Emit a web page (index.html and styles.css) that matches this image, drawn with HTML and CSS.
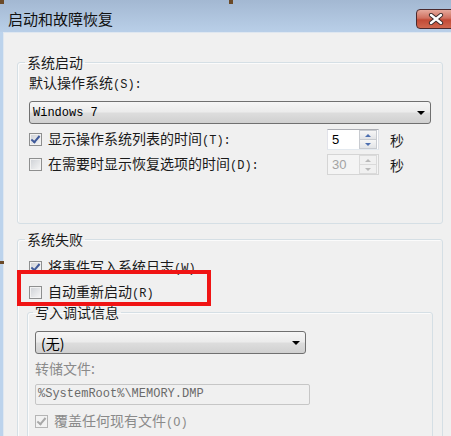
FILE: index.html
```html
<!DOCTYPE html>
<html lang="zh-CN">

<head>
    <meta charset="UTF-8">
    <meta name="viewport" content="width=device-width, initial-scale=1.0">
    <title>启动和故障恢复</title>
    <link rel="stylesheet" href="styles.css">
</head>

<body>
    <div class="window">
        <div class="titlebar">
            <span class="title">启动和故障恢复</span>
            <button class="close">
                <svg width="16" height="12" viewBox="0 0 16 12">
                    <path d="M3 2 L13 10 M13 2 L3 10" stroke="#3a2a2a" stroke-width="4.2" stroke-linecap="round" />
                    <path d="M3 2 L13 10 M13 2 L3 10" stroke="#ffffff" stroke-width="2.4" stroke-linecap="round" />
                </svg>
            </button>
        </div>

        <div class="client">
            <fieldset class="group startup">
                <legend>系统启动</legend>
                <div class="label">默认操作系统<span class="key">(S):</span></div>
                <div class="combo">
                    <span class="mono">Windows 7</span>
                    <span class="arrow"></span>
                </div>
                <div class="row first">
                    <span class="check checked"></span>
                    <span class="row-label">显示操作系统列表的时间<span class="key">(T):</span></span>
                    <div class="spin">
                        <span class="spin-value">5</span>
                        <span class="spin-buttons">
                            <span class="spin-btn"><span class="up"></span></span>
                            <span class="spin-btn"><span class="down"></span></span>
                        </span>
                    </div>
                    <span class="unit">秒</span>
                </div>
                <div class="row">
                    <span class="check"></span>
                    <span class="row-label">在需要时显示恢复选项的时间<span class="key">(D):</span></span>
                    <div class="spin disabled">
                        <span class="spin-value">30</span>
                        <span class="spin-buttons">
                            <span class="spin-btn"><span class="up"></span></span>
                            <span class="spin-btn"><span class="down"></span></span>
                        </span>
                    </div>
                    <span class="unit">秒</span>
                </div>
            </fieldset>

            <fieldset class="group failure">
                <legend>系统失败</legend>
                <div class="row first">
                    <span class="check checked"></span>
                    <span class="row-label">将事件写入系统日志<span class="key">(W)</span></span>
                </div>
                <div class="row">
                    <span class="check"></span>
                    <span class="row-label">自动重新启动<span class="key">(R)</span></span>
                </div>

                <fieldset class="group debug">
                    <legend>写入调试信息</legend>
                    <div class="combo short">
                        <span>(无)</span>
                        <span class="arrow"></span>
                    </div>
                    <div class="label muted">转储文件:</div>
                    <div class="textbox mono">%SystemRoot%\MEMORY.DMP</div>
                    <div class="row dump">
                        <span class="check checked disabled"></span>
                        <span class="row-label muted">覆盖任何现有文件<span class="key">(O)</span></span>
                    </div>
                </fieldset>
            </fieldset>
        </div>
    </div>

    <!-- annotation drawn over the dialog -->
    <div class="highlight"></div>
    <div class="mark mark-a"></div>
    <div class="mark mark-b"></div>
    <div class="mark mark-c"></div>
</body>

</html>
```

FILE: styles.css
```css
body {
    margin: 0;
    width: 451px;
    height: 436px;
    overflow: hidden;
    background-color: #bcd3ec;
    font-family: "Noto Sans CJK SC", "Liberation Sans", sans-serif;
    color: #1a1a1a;
    position: relative;
}

.window {
    display: flex;
    flex-direction: column;
    height: 100%;
}

.titlebar {
    height: 32px;
    display: flex;
    align-items: flex-start;
    padding-left: 8px;
    background: linear-gradient(#a3b8d2, #b9cfe8);
    overflow: hidden;
    flex-shrink: 0;
}

.title {
    margin-top: 9px;
    font-size: 15px;
    line-height: 20px;
    color: #111;
}

.close {
    margin-left: auto;
    margin-top: 9px;
    margin-right: -5px;
    width: 40px;
    height: 20px;
    padding: 0;
    border: 1px solid #4a2a2e;
    border-radius: 4px;
    background: linear-gradient(#e6a99c, #d0705f 45%, #c24a36 55%, #d0684f);
    display: flex;
    align-items: center;
    justify-content: center;
}

.client {
    flex: 1;
    min-height: 0;
    margin-left: 3px;
    border-left: 1px solid #dfe7f0;
    border-top: 1px solid #dfe7f0;
    background-color: #f0f0f0;
    padding: 21px 8px 0 13px;
}

.group {
    margin: 0;
    border: 1px solid #d5dfe5;
    border-radius: 3px;
    box-shadow: inset 1px 1px 0 #fbfbfb;
    padding: 3px 11px 48px 11px;
}

.group legend {
    font-size: 14px;
    line-height: 16px;
    padding: 0 2px;
    margin-left: -4px;
}

.failure {
    margin-top: 7px;
    padding-top: 5px;
}

.debug {
    margin: 1px -2px 0 -2px;
    padding: 11px 7px 20px 7px;
}

.debug legend {
    margin-left: -2px;
}

.label {
    font-size: 14px;
    line-height: 18px;
}

.key {
    font-family: "Liberation Mono", monospace;
    font-size: 12px;
}

.muted {
    color: #8a8a8a;
}

.mono {
    font-family: "Liberation Mono", monospace;
    font-size: 12px;
}

.combo {
    margin-top: 7px;
    height: 23px;
    box-sizing: border-box;
    border: 1px solid #707070;
    border-radius: 3px;
    background: linear-gradient(#f6f6f6, #ebebeb 48%, #dddddd 52%, #d0d0d0);
    display: flex;
    align-items: center;
    padding: 0 5px 0 3px;
    font-size: 14px;
    color: #000;
}

.combo.short {
    margin-top: 0;
    width: 271px;
    padding-left: 5px;
}

.arrow {
    margin-left: auto;
    width: 0;
    height: 0;
    border-left: 4px solid transparent;
    border-right: 4px solid transparent;
    border-top: 4px solid #000;
}

.row {
    display: flex;
    align-items: center;
    height: 21px;
    margin-top: 4px;
}

.row.first {
    margin-top: 5px;
}

.row.dump {
    margin-top: 6px;
}

.row-label {
    flex: 1;
    font-size: 14px;
    line-height: 18px;
}

.check {
    width: 13px;
    height: 13px;
    box-sizing: border-box;
    margin-right: 6px;
    border: 1px solid #8e8f8f;
    background: linear-gradient(135deg, #cdd0d5, #f7f7f7);
    box-shadow: inset 0 0 0 1px #f2f2f2;
    position: relative;
    flex-shrink: 0;
}

.check.checked::after {
    content: "";
    position: absolute;
    left: 3px;
    top: 0px;
    width: 3px;
    height: 7px;
    border-right: 2px solid #3f5a9a;
    border-bottom: 2px solid #3f5a9a;
    transform: rotate(40deg);
}

.check.disabled {
    border-color: #b5b5b5;
    background: #f2f2f2;
}

.check.disabled::after {
    border-color: #a8a8a8;
}

.spin {
    width: 52px;
    height: 21px;
    box-sizing: border-box;
    display: flex;
    border: 1px solid #abadb3;
    border-color: #abadb3 #dbdfe6 #e3e9ef #e2e3ea;
    background: #fff;
}

.spin-value {
    flex: 1;
    padding-left: 4px;
    font-family: "Liberation Sans", sans-serif;
    font-size: 13px;
    line-height: 19px;
    color: #000;
}

.spin-buttons {
    width: 18px;
    display: flex;
    flex-direction: column;
    margin: 0 1px 0 0;
}

.spin-btn {
    flex: 1;
    box-sizing: border-box;
    border: 1px solid #c8cbd0;
    background: linear-gradient(#f6f6f6, #e2e4e7);
    display: flex;
    align-items: center;
    justify-content: center;
}

.spin-btn + .spin-btn {
    border-top: none;
}

.up,
.down {
    width: 0;
    height: 0;
    border-left: 3px solid transparent;
    border-right: 3px solid transparent;
}

.up {
    border-bottom: 3px solid #4d6fb0;
}

.down {
    border-top: 3px solid #4d6fb0;
}

.spin.disabled {
    border-color: #d5d5d5;
    background: #f4f4f4;
}

.spin.disabled .spin-value {
    color: #a3a3a3;
}

.spin.disabled .spin-btn {
    border-color: #dadada;
    background: #f0f0f0;
}

.spin.disabled .up {
    border-bottom-color: #b8b8b8;
}

.spin.disabled .down {
    border-top-color: #b8b8b8;
}

.unit {
    margin-left: 11px;
    margin-right: 27px;
    font-size: 14px;
    line-height: 18px;
}

.debug .label {
    margin-top: 5px;
}

.textbox {
    margin-top: 7px;
    width: 275px;
    height: 21px;
    box-sizing: border-box;
    border: 1px solid #c6c6c6;
    border-radius: 2px;
    background: #f0f0f0;
    padding-left: 2px;
    line-height: 19px;
    color: #6a6a6a;
}

.highlight {
    position: absolute;
    left: 17px;
    top: 270px;
    width: 194px;
    height: 36px;
    box-sizing: border-box;
    border: 4px solid #f01414;
}

.mark {
    position: absolute;
    width: 4px;
    height: 4px;
    background-color: #6b4a28;
}

.mark-a {
    left: 0;
    top: 0;
}

.mark-b {
    left: 229px;
    top: 0;
}

.mark-c {
    left: 0;
    top: 261px;
    height: 3px;
}
```
